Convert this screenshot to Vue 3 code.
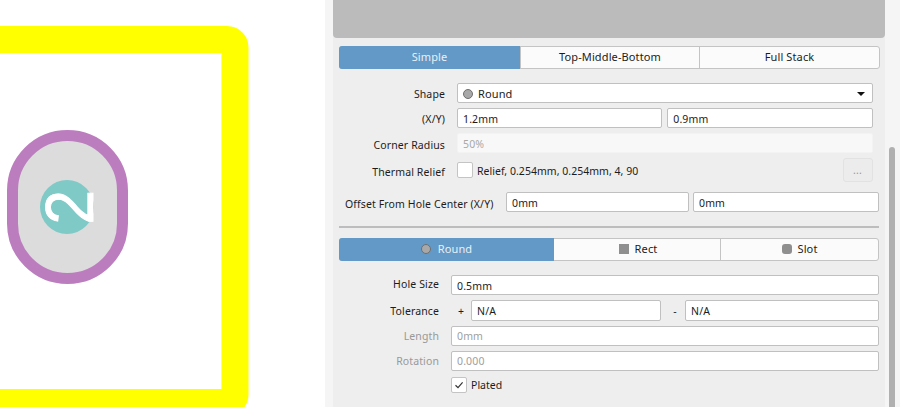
<script setup>
const topTabs = [
  { label: 'Simple', active: true },
  { label: 'Top-Middle-Bottom' },
  { label: 'Full Stack' }
]
const holeTabs = [
  { label: 'Round', icon: 'round', active: true },
  { label: 'Rect', icon: 'rect' },
  { label: 'Slot', icon: 'slot' }
]
</script>

<template>
  <div class="app">
    <div class="canvas">
      <svg class="board" width="325" height="407" viewBox="0 0 325 407">
        <rect x="-60" y="39.5" width="295" height="363" rx="8" fill="#fff" stroke="#ffff00" stroke-width="27" />
        <rect x="12.5" y="135.5" width="110" height="143" rx="55" fill="#dcdcdc" stroke="#bc7dbf" stroke-width="11" />
        <circle cx="67" cy="207" r="27" fill="#7fc9c7" />
        <text class="pad-number" transform="translate(93 224.5) rotate(-90) scale(1 1.1)">2</text>
      </svg>
    </div>

    <div class="panel">
      <div class="content">
        <div class="preview"></div>

        <div class="tabs tabs-top">
          <div v-for="t in topTabs" :key="t.label" class="tab" :class="{ active: t.active }">{{ t.label }}</div>
        </div>

        <div class="form form-pad">
          <div class="row">
            <span class="label">Shape</span>
            <div class="input select">
              <span class="dot round"></span>
              <span class="select-text">Round</span>
              <span class="caret"></span>
            </div>
          </div>
          <div class="row">
            <span class="label">(X/Y)</span>
            <div class="input grow">1.2mm</div>
            <div class="input grow">0.9mm</div>
          </div>
          <div class="row">
            <span class="label low">Corner Radius</span>
            <div class="input disabled flat">50%</div>
          </div>
          <div class="row thermal">
            <span class="label low">Thermal Relief</span>
            <span class="check"></span>
            <span class="check-text">Relief, 0.254mm, 0.254mm, 4, 90</span>
            <span class="more">...</span>
          </div>
          <div class="row offset">
            <span class="offset-label">Offset From Hole Center (X/Y)</span>
            <div class="input offset-a">0mm</div>
            <div class="input grow">0mm</div>
          </div>
        </div>

        <div class="divider"></div>

        <div class="tabs tabs-hole">
          <div v-for="t in holeTabs" :key="t.label" class="tab" :class="[{ active: t.active }, 'tab-' + t.icon]">
            <span class="dot" :class="t.icon"></span>{{ t.label }}
          </div>
        </div>

        <div class="form hole">
          <div class="row hole-size">
            <span class="label">Hole Size</span>
            <div class="input grow">0.5mm</div>
          </div>
          <div class="row tol">
            <span class="label">Tolerance</span>
            <span class="sign">+</span>
            <div class="input tol-a">N/A</div>
            <span class="sign">-</span>
            <div class="input grow">N/A</div>
          </div>
          <div class="row">
            <span class="label muted">Length</span>
            <div class="input grow dim">0mm</div>
          </div>
          <div class="row">
            <span class="label muted">Rotation</span>
            <div class="input grow dim">0.000</div>
          </div>
          <div class="row plated">
            <span class="check checked">
              <svg width="10" height="10" viewBox="0 0 10 10"><path d="M1.5 5.2 4 7.6 8.6 2.4" fill="none" stroke="#333" stroke-width="1.2" /></svg>
            </span>
            <span class="check-text">Plated</span>
          </div>
        </div>
      </div>

      <div class="track"><div class="thumb"></div></div>
    </div>
  </div>
</template>

<style scoped>
.app {
  display: flex;
  width: 900px;
  height: 407px;
  overflow: hidden;
  background: #fff;
  font-family: "Noto Sans", "Open Sans", sans-serif;
  font-size: 10.5px;
  letter-spacing: 0.12px;
  color: #1c1c1c;
}
.canvas {
  width: 325px;
  flex: none;
}
.board {
  display: block;
}
.pad-number {
  font-family: "Liberation Sans", sans-serif;
  font-size: 62px;
  fill: #fff;
  stroke: #fff;
  stroke-width: 0.8px;
  letter-spacing: 0;
}
.panel {
  flex: 1;
  display: flex;
  background: #f5f5f5;
  padding-left: 8px;
}
.content {
  width: 552px;
  background: #eeeeee;
  padding: 0 6px 0 6px;
  box-sizing: border-box;
}
.preview {
  height: 38px;
  margin: 0 -6px;
  background: #bbbbbb;
  border-radius: 0 0 4px 4px;
}
.tabs {
  display: flex;
  height: 23px;
  box-sizing: border-box;
  border: 1px solid #c4c4c4;
  border-radius: 3px;
  background: #fbfbfb;
  font-size: 11px;
}
.tabs-top {
  margin-top: 8px;
  width: 541px;
}
.tabs-hole {
  margin-top: 10px;
  width: 540px;
}
.tab {
  display: flex;
  align-items: center;
  justify-content: center;
  gap: 6px;
  padding-bottom: 2px;
  box-sizing: border-box;
  border-left: 1px solid #c4c4c4;
}
.tabs-top .tab {
  flex: 0 0 179px;
}
.tabs-top .tab:first-child {
  flex-basis: 181px;
}
.tabs-top .tab:last-child {
  flex: 1;
}
.tab.active {
  margin: -1px 0 -1px -1px;
  border: 0;
  border-radius: 3px 0 0 3px;
  background: #6299c6;
  color: #e8f0f7;
}
.tab-round {
  flex: 0 0 215px;
  gap: 7px;
}
.tab-rect {
  flex: 0 0 166px;
  padding-left: 2px;
  border-left: 0;
}
.tab-slot {
  flex: 1;
}
.dot {
  display: block;
  flex: none;
  width: 10px;
  height: 10px;
  background: #8f8f8f;
}
.dot.round {
  border-radius: 50%;
  border: 1px solid #6f6f6f;
  box-sizing: border-box;
  background: #a8a8a8;
}
.dot.slot {
  border-radius: 3px;
}
.form {
  display: flex;
  flex-direction: column;
}
.form-pad {
  margin-top: 14px;
  gap: 5px;
}
.row {
  display: flex;
  align-items: center;
  height: 20px;
  gap: 5px;
}
.label {
  flex: none;
  width: 106px;
  margin-right: 7px;
  padding-top: 2px;
  text-align: right;
}
.low {
  padding-top: 4px;
}
.input {
  display: flex;
  align-items: center;
  box-sizing: border-box;
  height: 20px;
  padding-left: 5px;
  padding-top: 1px;
  background: #fff;
  border: 1px solid #c0c0c0;
  border-radius: 2px;
  letter-spacing: 0.15px;
}
.grow {
  flex: 1;
  min-width: 0;
}
.form-pad .row {
  padding-right: 6.5px;
}
.select {
  flex: 1;
  gap: 5px;
  padding-right: 7px;
  font-size: 11px;
  letter-spacing: 0.12px;
}
.select-text {
  flex: 1;
}
.caret {
  width: 0;
  height: 0;
  border-left: 4px solid transparent;
  border-right: 4px solid transparent;
  border-top: 4px solid #111;
}
.disabled {
  flex: 1;
  background: #f8f8f8;
  color: #a8a8a8;
}
.flat {
  border-color: #f3f3f3;
}
.thermal {
  height: 24px;
}
.check {
  display: flex;
  align-items: center;
  justify-content: center;
  flex: none;
  width: 16px;
  height: 16px;
  box-sizing: border-box;
  background: #fff;
  border: 1px solid #c4c4c4;
  border-radius: 2px;
}
.check-text {
  margin-left: -1px;
  flex: 1;
  letter-spacing: 0.03px;
}
.thermal .check-text {
  padding-top: 1px;
}
.more {
  display: flex;
  align-items: center;
  justify-content: center;
  flex: none;
  width: 30px;
  height: 24px;
  box-sizing: border-box;
  border: 1px solid #e2e2e2;
  border-radius: 3px;
  background: #ececec;
  color: #999;
}
.form-pad .offset {
  margin-top: 5px;
  padding: 0 0 0 6px;
  gap: 4px;
}
.offset-label {
  flex: none;
  width: 157px;
  padding-top: 3px;
}
.offset-a {
  flex: 0 0 183px;
}
.divider {
  height: 2px;
  margin-top: 14px;
  background: #bdbdbd;
}
.hole {
  margin-top: 14px;
  gap: 5px;
  width: 540px;
}
.hole .label {
  width: 100px;
  margin-right: 7px;
  padding-top: 0;
}
.hole .input {
  padding-top: 0;
}
.hole .hole-size .label {
  padding-bottom: 2px;
}
.hole .hole-size .input {
  padding-top: 2px;
}
.tol {
  gap: 0;
  height: 21px;
}
.hole .tol .input {
  height: 21px;
}
.sign {
  flex: none;
  width: 20px;
  text-align: center;
}
.hole .tol .label {
  margin-right: 12px;
}
.tol-a {
  flex: 0 0 190px;
  margin-right: 4px;
}
.muted {
  color: #999;
}
.dim {
  color: #a0a0a0;
}
.plated {
  margin-left: 112px;
  height: 16px;
  margin-top: 1px;
}
.track {
  width: 6px;
  margin-left: 4px;
  padding-top: 147px;
}
.thumb {
  height: 260px;
  background: #b0b0b0;
  border-radius: 3px 3px 0 0;
}
</style>
